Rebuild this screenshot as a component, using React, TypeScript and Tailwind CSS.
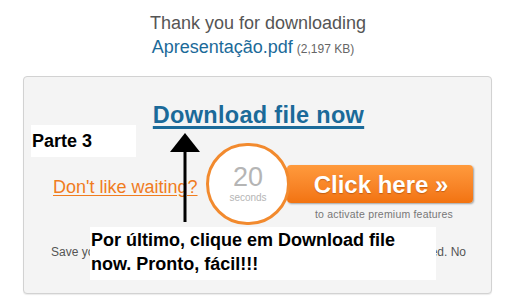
import * as React from 'react'

// ---------------------------------------------------------------------------
// Pieces
// ---------------------------------------------------------------------------

function Countdown({ value }: { value: number }) {
  return (
    <div className="relative z-10 flex h-[82px] w-[84px] flex-shrink-0 flex-col items-center justify-center rounded-full border-[3px] border-[#f28a2e] bg-white">
      <span className="text-[27px] leading-[28px] text-[#b5b5b5]">{value}</span>
      <span className="text-[10px] leading-[14px] text-[#b5b5b5]">seconds</span>
    </div>
  )
}

function ClickHere() {
  return (
    <div className="-ml-[3px] flex flex-col items-center">
      <button className="flex h-[38px] w-[186px] items-center justify-center rounded-[4px] bg-gradient-to-b from-[#ff9a3c] to-[#f2730f] pl-[2px] pt-[2px] text-[24px] font-bold text-white shadow-[1px_1px_2px_rgba(0,0,0,0.35)] [text-shadow:0_1px_1px_rgba(120,50,0,0.4)]">
        Click here »
      </button>
      <span className="mt-[4px] pl-[8px] text-[10.5px] tracking-[0.2px] text-[#777]">
        to activate premium features
      </span>
    </div>
  )
}

function Arrow() {
  return (
    <svg className="absolute left-[169px] top-[133px]" width="32" height="92" viewBox="0 0 32 92">
      <polygon points="16,0 31,19 1,19" fill="#000" />
      <rect x="14.5" y="18" width="3" height="71" fill="#000" />
    </svg>
  )
}

// ---------------------------------------------------------------------------
// App
// ---------------------------------------------------------------------------

export default function App() {
  return (
    <div className="relative h-[301px] w-[505px] overflow-hidden bg-white font-['Liberation_Sans',Arial,sans-serif]">
      {/* Header */}
      <div className="flex flex-col items-center pl-[11px] pt-[12px]">
        <h1 className="text-[18px] leading-[22px] text-[#555]">Thank you for downloading</h1>
        <div className="mt-[2px] flex items-baseline gap-[4px] pr-[10px]">
          <span className="text-[18px] leading-[22px] text-[#1b6a99]">Apresentação.pdf</span>
          <span className="text-[12px] text-[#666]">(2,197 KB)</span>
        </div>
      </div>

      {/* Download box */}
      <div className="ml-[23px] mr-[13px] mt-[18px] h-[218px] rounded-[4px] border border-[#d2d2d2] bg-[#f4f4f4] shadow-[0_1px_1px_rgba(0,0,0,0.08)]">
        <div className="flex justify-center pt-[24px] pl-[2px]">
          <a className="text-[23.5px] font-bold leading-[28px] tracking-[0.3px] text-[#1b6a99] underline decoration-[3px] underline-offset-[3px]">
            Download file now
          </a>
        </div>

        <div className="mt-[14px] flex items-start pl-[29px]">
          <a className="mt-[31px] w-[153px] text-[18px] text-[#f07c1e] underline underline-offset-[2px]">
            Don't like waiting?
          </a>
          <Countdown value={20} />
          <div className="mt-[22px]">
            <ClickHere />
          </div>
        </div>

        <div className="mt-[18px] flex justify-between pl-[27px] pr-[25px] text-[12px] text-[#555]">
          <span>Save your time and money. Premium members get unlimited</span>
          <span>ed. No</span>
        </div>
      </div>

      {/* Annotations */}
      <div className="absolute left-[31px] top-[125px] flex h-[32px] w-[105px] items-start bg-white pl-[1px] pt-[3px] text-[18px] font-bold text-black">
        Parte 3
      </div>
      <Arrow />
      <div className="absolute left-[90px] top-[227px] h-[53px] w-[346px] bg-white pl-[1px] pt-[1px] text-[18px] font-bold leading-[24px] text-black">
        Por último, clique em Download file
        <br />
        now. Pronto, fácil!!!
      </div>
    </div>
  )
}
